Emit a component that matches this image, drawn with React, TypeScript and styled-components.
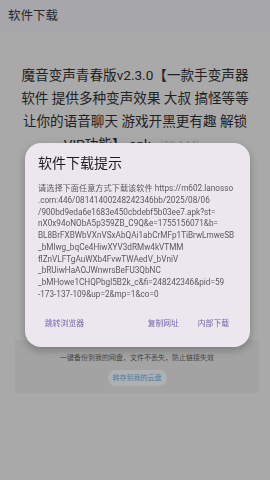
import React from "react";
import styled, { createGlobalStyle } from "styled-components";

const GlobalStyle = createGlobalStyle`
  html, body {
    margin: 0;
    padding: 0;
    background: #a9a9a9;
    font-family: Roboto, "Noto Sans CJK SC", sans-serif;
  }
  body {
    width: 270px;
    height: 480px;
    overflow: hidden;
  }
`;

const Page = styled.div`
  width: 270px;
  height: 480px;
  display: flex;
  flex-direction: column;
  background: #a9a9a9;
`;

const Header = styled.div`
  height: 32px;
  line-height: 32px;
  padding-left: 8px;
  font-size: 12.5px;
  color: #29282c;
  background: #a7a6ab;
`;

const Title = styled.div`
  margin-top: 32px;
  padding: 0 18px;
  text-align: center;
  font-size: 13.6px;
  line-height: 23px;
  color: #222222;
`;

const Size = styled.span`
  font-size: 10.5px;
  color: #8c8c8c;
  margin-left: 2px;
`;

const Card = styled.div`
  margin: auto 11px 87px 15px;
  padding: 13px 0 7px;
  background: #a3a3a3;
  display: flex;
  flex-direction: column;
  align-items: center;
  gap: 7px;
`;

const CardNote = styled.div`
  font-size: 7px;
  line-height: 10px;
  color: #454545;
`;

const SaveButton = styled.div`
  padding: 0 5px;
  height: 16px;
  line-height: 16px;
  border-radius: 8px;
  background: #aeb0b2;
  color: #4a7cab;
  font-size: 7px;
`;

const Dialog = styled.div`
  position: fixed;
  left: 25px;
  top: 143px;
  width: 225px;
  height: 204px;
  box-sizing: border-box;
  padding: 11px 13px 0;
  border-radius: 16px;
  background: #ece6ef;
  box-shadow: 0 3px 8px rgba(0, 0, 0, 0.25);
  display: flex;
  flex-direction: column;
`;

const DialogTitle = styled.div`
  font-size: 14px;
  line-height: 18px;
  color: #1d1b20;
`;

const DialogBody = styled.div`
  margin-top: 11px;
  font-size: 8.2px;
  line-height: 11.75px;
  color: #5a595e;
  white-space: nowrap;
`;

const Actions = styled.div`
  margin-top: 15px;
  display: flex;
  justify-content: space-between;
  padding: 0 8px 0 7px;
`;

const ActionGroup = styled.div`
  display: flex;
  gap: 19px;
`;

const Action = styled.div`
  font-size: 7.8px;
  line-height: 16px;
  color: #7565ad;
`;

const lines = [
  "请选择下面任意方式下载该软件 https://m602.lanosso",
  ".com:446/08141400248242346bb/2025/08/06",
  "/900bd9eda6e1683e450cbdebf5b03ee7.apk?st=",
  "nX0x94oNObA5p359ZB_C9Q&e=1755156071&b=",
  "BL8BrFXBWbVXnVSxAbQAi1abCrMFp1TiBrwLmweSB",
  "_bMlwg_bqCe4HiwXYV3dRMw4kVTMM",
  "flZnVLFTgAuWXb4FvwTWAedV_bVniV",
  "_bRUiwHaAOJWnwrsBeFU3QbNC",
  "_bMHowe1CHQPbgl5B2k_c&fi=248242346&pid=59",
  "-173-137-109&up=2&mp=1&co=0",
];

const App = () => {
  return (
    <Page>
      <GlobalStyle />
      <Header>软件下载</Header>
      <Title>
        魔音变声青春版v2.3.0【一款手变声器软件 提供多种变声效果 大叔 搞怪等等
        让你的语音聊天 游戏开黑更有趣 解锁VIP功能】.apk
        <Size>（59.1 M）</Size>
      </Title>
      <Card>
        <CardNote>一键备份到我的网盘，文件不丢失，防止链接失效</CardNote>
        <SaveButton>转存到我的云盘</SaveButton>
      </Card>

      <Dialog>
        <DialogTitle>软件下载提示</DialogTitle>
        <DialogBody>
          {lines.map((l) => (
            <div key={l}>{l}</div>
          ))}
        </DialogBody>
        <Actions>
          <Action>跳转浏览器</Action>
          <ActionGroup>
            <Action>复制网址</Action>
            <Action>内部下载</Action>
          </ActionGroup>
        </Actions>
      </Dialog>
    </Page>
  );
};

export default App;
